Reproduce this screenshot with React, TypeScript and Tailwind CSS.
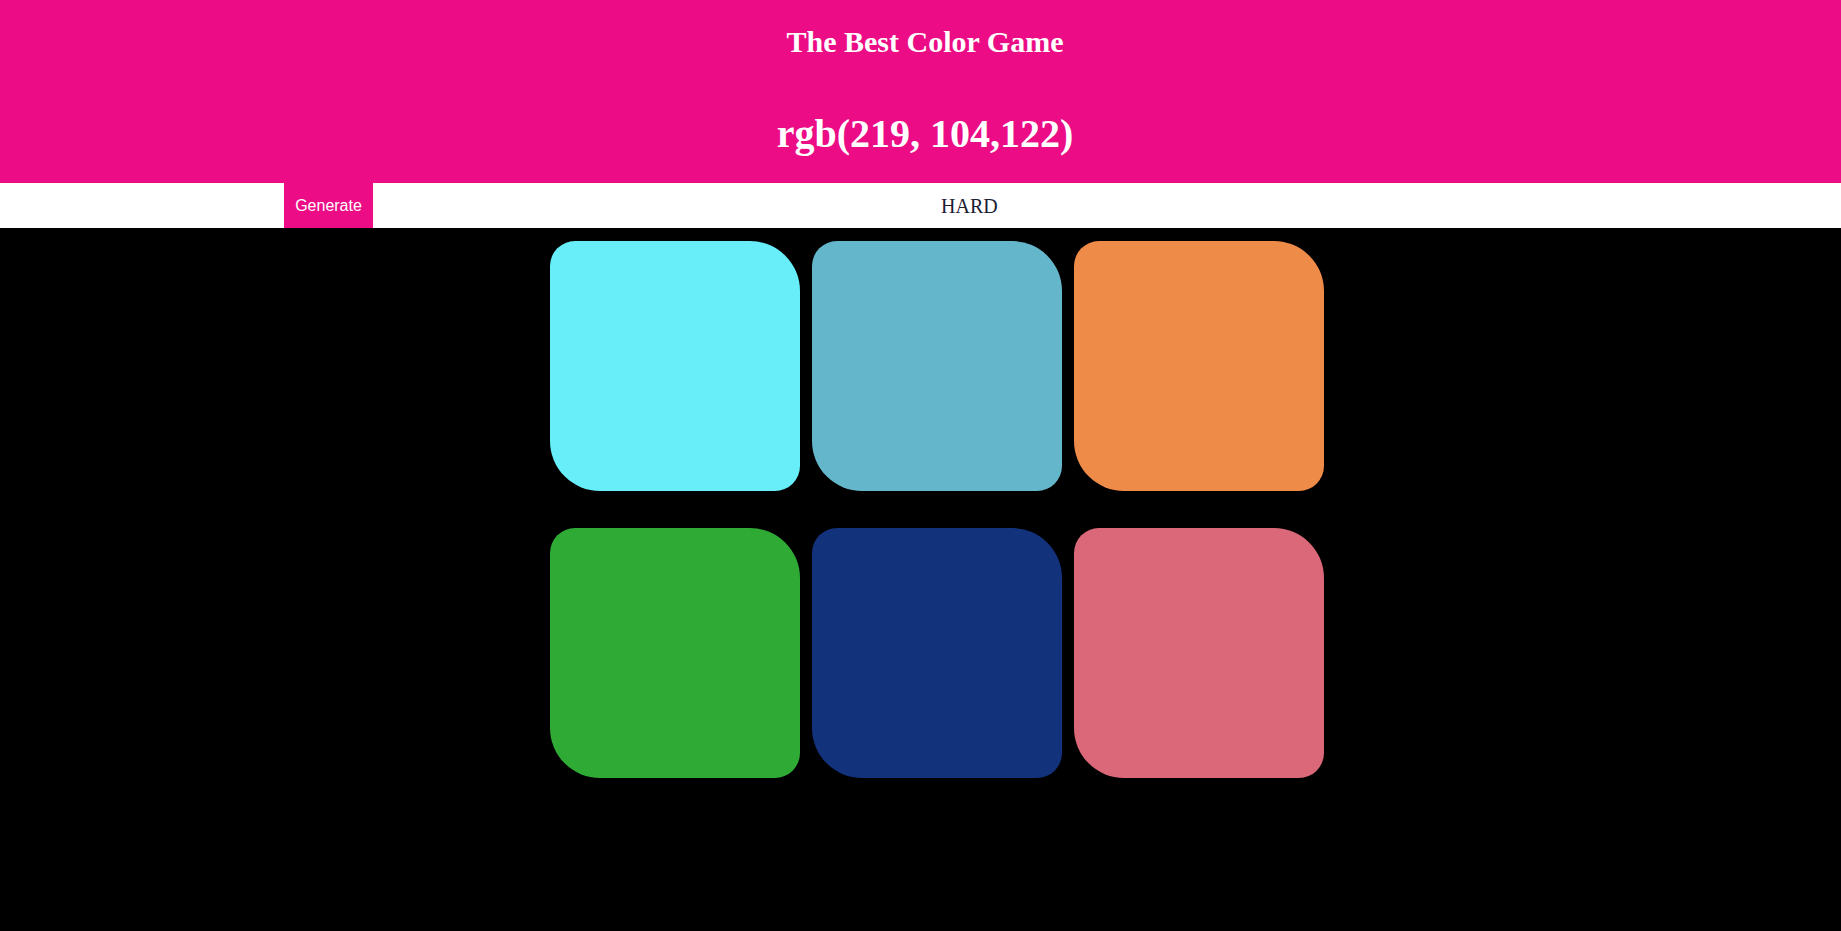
export default function App() {
  const colors = ["#67eef9", "#64b6cb", "#ef8b48", "#2eaa35", "#13327c", "#db6879"];
  return (
    <div className="min-h-screen bg-black">
      <header className="h-[183px] bg-[#eb0c86] pl-[9px] text-center text-white font-['Liberation_Serif',serif] font-bold">
        <h1 className="mt-0 pt-[24px] text-[30px] leading-[35px]">The Best Color Game</h1>
        <h2 className="mt-[52px] text-[40px] leading-[46px]">rgb(219, 104,122)</h2>
      </header>
      <div className="flex h-[45px] items-stretch bg-white pl-[284px]">
        <button className="w-[89px] bg-[#eb0c86] text-center font-['Liberation_Sans',Arial,sans-serif] text-[16px] text-white">
          Generate
        </button>
        <div className="ml-[568px] flex items-center font-['Liberation_Serif',serif] text-[20px] text-[#1b2033]">
          HARD
        </div>
      </div>
      <div className="grid grid-cols-[repeat(3,250px)] gap-x-[12px] gap-y-[37px] pl-[550px] pt-[13px]">
        {colors.map((c) => (
          <div key={c} className="h-[250px] w-[250px] rounded-[25px_50px_25px_50px]" style={{ backgroundColor: c }} />
        ))}
      </div>
    </div>
  );
}
